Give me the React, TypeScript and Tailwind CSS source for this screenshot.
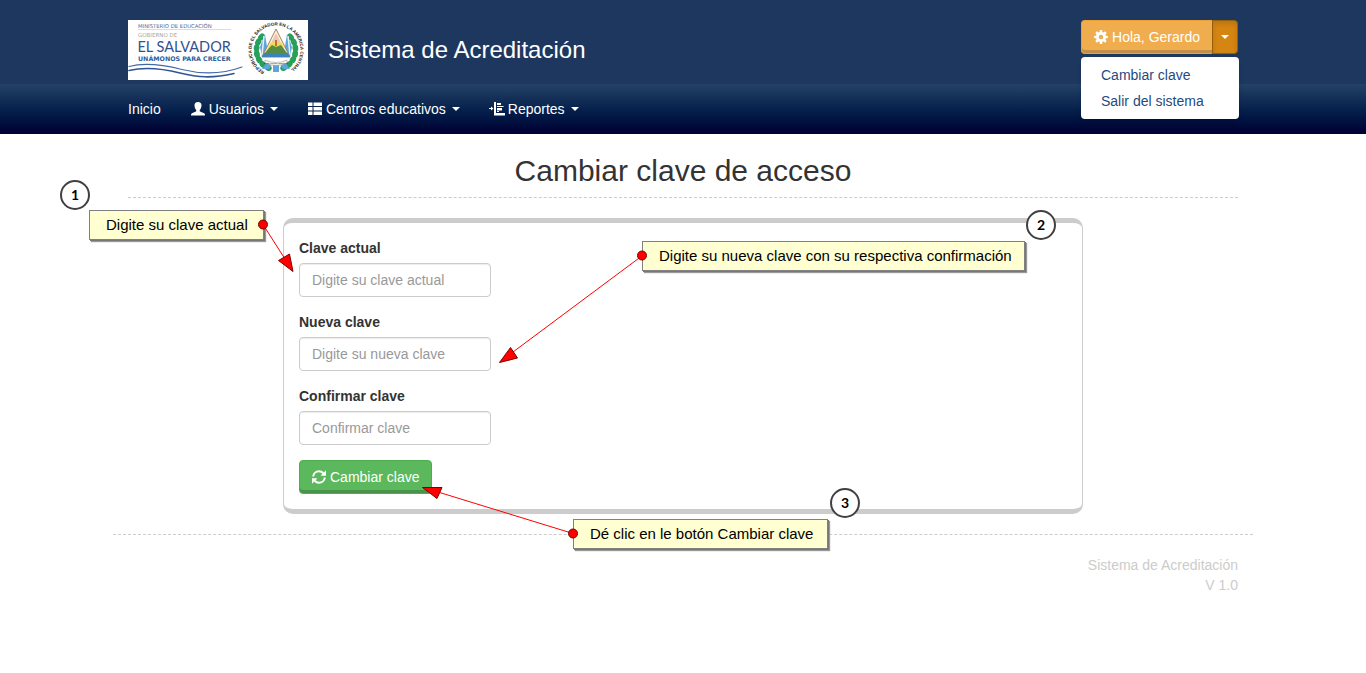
import React from "react";

function Caret() {
  return (
    <span
      aria-hidden="true"
      className="ml-0.5 inline-block h-0 w-0 border-x-4 border-t-4 border-x-transparent border-t-current"
    />
  );
}

function UserIcon() {
  return (
    <svg width="14" height="14" viewBox="0 0 14 14" fill="currentColor" aria-hidden="true">
      <path d="M7 0C4.600 0 3.400 1.300 3.500 3.500c.1 1.700.7 3.300 1.600 4.400.4.500.3 1.300-.2 1.500C3.700 10 1.500 10.700.6 11.500c-.5.4-.6 1-.6 2h14c0-1-.1-1.600-.6-2-.9-.8-3.100-1.500-4.300-2.100-.5-.2-.6-1-.2-1.500.9-1.100 1.500-2.700 1.600-4.400C10.600 1.300 9.400 0 7 0z" />
    </svg>
  );
}

function ListIcon() {
  return (
    <svg width="14" height="14" viewBox="0 0 14 14" fill="currentColor" aria-hidden="true">
      <path d="M0 .5h4.500v3.500H0zM5.500.5H14v3.500H5.500zM0 5h4.500v3.500H0zM5.500 5H14v3.500H5.500zM0 9.500h4.500V13H0zM5.500 9.500H14V13H5.500z" />
    </svg>
  );
}

function ReportIcon() {
  return (
    <svg width="14" height="14" viewBox="0 0 14 14" fill="currentColor" className="overflow-visible" aria-hidden="true">
      <path d="M4 0h2v13.500H4zM7 1h4v2H7zM7 4h6.500v1H7zM7 6h5v2.500H7zM7 9h2v1H7zM6 11h9v2.500H6zM-1 6h2V4.500L3.500 6.500 1 8.500V7h-2z" />
    </svg>
  );
}

function GearIcon() {
  const teeth = [0, 45, 90, 135];
  return (
    <svg width="14" height="14" viewBox="0 0 14 14" fill="currentColor" aria-hidden="true">
      {teeth.map((a) => (
        <path
          key={a}
          transform={`rotate(${a} 7 7)`}
          d="M5.500 3 5.900.1h2.200L8.500 3zM5.500 11 5.900 13.900h2.200L8.500 11z"
        />
      ))}
      <path
        fillRule="evenodd"
        d="M7 2a5 5 0 1 0 0 10A5 5 0 0 0 7 2zm0 2.700a2.300 2.300 0 1 1 0 4.600 2.300 2.300 0 0 1 0-4.600z"
      />
    </svg>
  );
}

function RefreshIcon() {
  return (
    <svg width="14" height="14" viewBox="0 0 14 14" aria-hidden="true">
      <g fill="none" stroke="currentColor" strokeWidth="2">
        <path d="M1.200 6.500C1.500 3.500 4 1.300 7 1.300c1.700 0 3.200.7 4.300 1.900" />
        <path d="M12.800 7.500c-.3 3-2.800 5.200-5.800 5.200-1.700 0-3.200-.7-4.300-1.900" />
      </g>
      <path fill="currentColor" d="M14 .3v5.500H8.500zM0 13.700V8.200h5.500z" />
    </svg>
  );
}

function Logo() {
  const leaves = [-156, -138, -120, -102, -84, -66, -48, 48, 66, 84, 102, 120, 138, 156];
  return (
    <svg
      width="180"
      height="60"
      viewBox="0 0 180 60"
      role="img"
      aria-label="Ministerio de Educación, Gobierno de El Salvador"
      className="shrink-0 bg-white"
    >
      <text x="10" y="8" fontSize="5.300" fontFamily="DejaVu Sans" fill="#4d6a9b">MINISTERIO DE EDUCACIÓN</text>
      <path d="M10 9.500h93" stroke="#b9c6da" strokeWidth=".6" />
      <text x="10" y="17" fontSize="5.500" fontFamily="DejaVu Sans" fill="#a5a5a5">GOBIERNO DE</text>
      <text x="9.500" y="32" fontSize="14.500" fontFamily="Lato" fill="#33518f">EL SALVADOR</text>
      <text x="10" y="41" fontSize="6.300" fontFamily="DejaVu Sans" fontWeight="bold" fill="#2c5f9e">UNÁMONOS PARA CRECER</text>
      <g fill="none" strokeLinecap="round">
        <path d="M1 46.500C18 42 36 45 54 49.500S92 55 114 47" stroke="#4468a6" strokeWidth="1.200" />
        <path d="M1 50.500C18 46.500 34 48.500 52 53S84 58.500 106 53.500" stroke="#2f5596" strokeWidth="1.600" />
      </g>
      <defs>
        <path id="sealArc" d="M136.500 51.600A24.500 24.500 0 1 1 159.500 51.600" />
      </defs>
      <text fontSize="4.500" fontFamily="Liberation Sans" fontWeight="bold" fill="#222">
        <textPath href="#sealArc">REPÚBLICA DE EL SALVADOR EN LA AMÉRICA CENTRAL</textPath>
      </text>
      <g fill="#27a05a">
        {leaves.map((a) => (
          <ellipse key={a} cx="148" cy="10.500" rx="3.800" ry="2.900" transform={`rotate(${a} 148 30)`} />
        ))}
      </g>
      <g fill="#5da5dc">
        <path d="M137 14l-5 13 2 10 6-4zM159 14l5 13-2 10-6-4zM140 41l-6 8h7l3-5zM156 41l6 8h-7l-3-5z" />
        <path d="M145 43h6v9h-6z" />
      </g>
      <path d="M136 16l-2 19M160 16l2 19" stroke="#e6f2fb" strokeWidth="1.500" />
      <path d="M148 9l14 28h-28z" fill="#fff4d5" stroke="#a87f58" strokeWidth="1" />
      <path d="M148 13l5 10h-10z" fill="#e9c8bc" />
      <path d="M140 29a8 8 0 0 1 16 0z" fill="#f1db5b" />
      <path d="M140 29l4-4 4 2 5-2 6 8h-22z" fill="#568d45" />
      <path d="M136 33h24l2 4h-28z" fill="#3d83b7" />
      <path d="M148 20v6" stroke="#c2443a" strokeWidth="1.500" />
      <path d="M137 40q11 5 22 0v3q-11 5-22 0z" fill="#f7f4e7" stroke="#777" strokeWidth=".4" />
      <text x="148" y="44" textAnchor="middle" fontSize="2.200" fontFamily="Liberation Sans" fill="#333">DIOS UNIÓN LIBERTAD</text>
    </svg>
  );
}

function NavItem({ icon, label }: { icon?: React.ReactNode; label: string }) {
  return (
    <li>
      <a href="#" className="flex items-center gap-1 px-[15px] py-[15px]">
        {icon}
        <span>{label}</span>
        {icon && <Caret />}
      </a>
    </li>
  );
}

function Field({ id, label, placeholder }: { id: string; label: string; placeholder: string }) {
  return (
    <div className="mb-[15px]">
      <label htmlFor={id} className="mb-[5px] block font-bold">
        {label}
      </label>
      <input
        id={id}
        type="password"
        placeholder={placeholder}
        className="block h-[34px] w-48 rounded border border-[#ccc] bg-white px-3 shadow-[inset_0_1px_1px_rgba(0,0,0,0.075)] placeholder:text-[#999]"
      />
    </div>
  );
}

function Note({ className, children }: { className: string; children: React.ReactNode }) {
  return (
    <div
      className={`absolute h-[30px] border border-[#808080] bg-[#ffffd2] pl-4 text-[15px] leading-7 whitespace-nowrap text-black shadow-[1px_1px_0_#777,2px_2px_1px_#999] ${className}`}
    >
      {children}
    </div>
  );
}

function Step({ className, children }: { className: string; children: React.ReactNode }) {
  return (
    <div
      className={`absolute flex size-[30px] items-center justify-center rounded-full border-2 border-[#404040] bg-white font-[Lato,sans-serif] text-sm font-bold text-black ${className}`}
    >
      {children}
    </div>
  );
}

function Annotations() {
  return (
    <div className="pointer-events-none absolute inset-0">
      <Step className="top-[46px] left-[-53px]">1</Step>
      <Note className="top-[76px] left-[-24px] w-[175px]">Digite su clave actual</Note>
      <Step className="top-[76px] left-[913px]">2</Step>
      <Note className="top-[107px] left-[529px] w-[383px]">
        Digite su nueva clave con su respectiva confirmación
      </Note>
      <Step className="top-[354px] left-[717px]">3</Step>
      <Note className="top-[385px] left-[460px] w-[255px]">Dé clic en le botón Cambiar clave</Note>
      <svg className="absolute inset-0 size-full overflow-visible" aria-hidden="true">
        <g stroke="#f00" strokeWidth="1">
          <path d="M150 90.500L172 125M529.500 121.500L400 218M460 399.500L325 358" />
        </g>
        <g fill="#f00" stroke="#800000" strokeWidth="1">
          <path d="M180 137.500l-14.500-11 11-6.500zM386.500 228.500l11-15 7 10.500zM309.500 353.500h19.500l-5 11z" />
          <circle cx="150" cy="90.500" r="4.500" />
          <circle cx="529" cy="121.500" r="4.500" />
          <circle cx="460" cy="399.500" r="4.500" />
        </g>
      </svg>
    </div>
  );
}

export default function App() {
  return (
    <div className="min-h-screen bg-white font-['Liberation_Sans',Arial,sans-serif] text-sm leading-5 text-[#333]">
      <header className="bg-[#1e375f] text-white">
        <div className="mx-auto flex max-w-[1140px] items-start justify-between px-[15px] pt-5 pb-1">
          <div className="flex items-center gap-5">
            <Logo />
            <span className="text-2xl">Sistema de Acreditación</span>
          </div>
          <div className="relative flex">
            <button
              type="button"
              className="flex h-[34px] items-center gap-1 rounded-l border border-r-0 border-[#eea236] bg-[#f0ad4e] px-3 shadow-[inset_0_-3px_0_#c2904a]"
            >
              <GearIcon />
              Hola, Gerardo
            </button>
            <button
              type="button"
              aria-label="Opciones de usuario"
              aria-expanded="true"
              className="flex h-[34px] w-[26px] items-center justify-center rounded-r border border-[#985f0d] bg-[#d58512] shadow-[inset_0_3px_5px_rgba(0,0,0,0.125)]"
            >
              <span className="h-0 w-0 border-x-4 border-t-4 border-x-transparent border-t-white" />
            </button>
            <ul className="absolute top-[37px] -right-px z-10 w-[158px] rounded bg-white py-[5px] text-[#1f4b7f] shadow-md">
              <li>
                <a href="#" className="block px-5 py-[3px]">Cambiar clave</a>
              </li>
              <li>
                <a href="#" className="block px-5 py-[3px]">Salir del sistema</a>
              </li>
            </ul>
          </div>
        </div>
        <nav className="bg-linear-to-b from-[#244266] to-[#000033]">
          <ul className="mx-auto flex max-w-[1140px]">
            <NavItem label="Inicio" />
            <NavItem icon={<UserIcon />} label="Usuarios" />
            <NavItem icon={<ListIcon />} label="Centros educativos" />
            <NavItem icon={<ReportIcon />} label="Reportes" />
          </ul>
        </nav>
      </header>

      <div className="relative mx-auto max-w-[1140px]">
        <main className="px-[15px] pt-5">
          <h1 className="border-b border-dashed border-[#ccc] pb-2.5 text-center text-3xl leading-[33px]">
            Cambiar clave de acceso
          </h1>
          <form
            className="mx-auto mt-5 max-w-[800px] rounded-[10px] border border-y-[5px] border-[#ccc] p-[15px]"
            onSubmit={(e) => e.preventDefault()}
          >
            <Field id="actual" label="Clave actual" placeholder="Digite su clave actual" />
            <Field id="nueva" label="Nueva clave" placeholder="Digite su nueva clave" />
            <Field id="confirmar" label="Confirmar clave" placeholder="Confirmar clave" />
            <button
              type="submit"
              className="flex h-[34px] items-center gap-1 rounded border border-[#4cae4c] bg-[#5cb85c] px-3 text-white shadow-[inset_0_-3px_0_#4a934a]"
            >
              <RefreshIcon />
              Cambiar clave
            </button>
          </form>
        </main>
        <footer className="mt-5 border-t border-dashed border-[#ccc] px-[15px] pt-5 text-right text-[#ccc]">
          <p>Sistema de Acreditación</p>
          <p>V 1.0</p>
        </footer>
        <Annotations />
      </div>
    </div>
  );
}
